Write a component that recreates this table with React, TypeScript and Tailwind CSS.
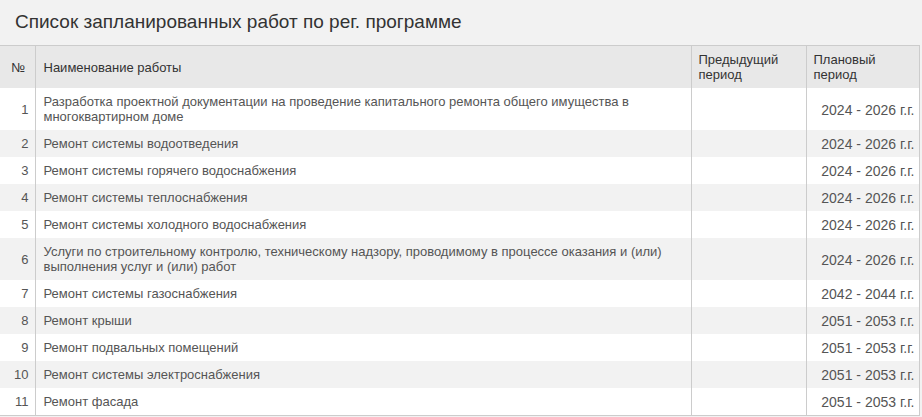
import React from 'react';

interface Work {
    num: number;
    name: string;
    prev: string;
    plan: string;
}

const works: Work[] = [
    { num: 1, name: 'Разработка проектной документации на проведение капитального ремонта общего имущества в многоквартирном доме', prev: '', plan: '2024 - 2026 г.г.' },
    { num: 2, name: 'Ремонт системы водоотведения', prev: '', plan: '2024 - 2026 г.г.' },
    { num: 3, name: 'Ремонт системы горячего водоснабжения', prev: '', plan: '2024 - 2026 г.г.' },
    { num: 4, name: 'Ремонт системы теплоснабжения', prev: '', plan: '2024 - 2026 г.г.' },
    { num: 5, name: 'Ремонт системы холодного водоснабжения', prev: '', plan: '2024 - 2026 г.г.' },
    { num: 6, name: 'Услуги по строительному контролю, техническому надзору, проводимому в процессе оказания и (или) выполнения услуг и (или) работ', prev: '', plan: '2024 - 2026 г.г.' },
    { num: 7, name: 'Ремонт системы газоснабжения', prev: '', plan: '2042 - 2044 г.г.' },
    { num: 8, name: 'Ремонт крыши', prev: '', plan: '2051 - 2053 г.г.' },
    { num: 9, name: 'Ремонт подвальных помещений', prev: '', plan: '2051 - 2053 г.г.' },
    { num: 10, name: 'Ремонт системы электроснабжения', prev: '', plan: '2051 - 2053 г.г.' },
    { num: 11, name: 'Ремонт фасада', prev: '', plan: '2051 - 2053 г.г.' },
];

const App: React.FC = () => {
    return (
        <div className="w-[922px] h-[417px] bg-[#f2f2f2] overflow-hidden font-['Liberation_Sans',Arial,sans-serif]">
            <h1 className="h-[45px] pl-[15px] pt-[10px] text-[19px] leading-[24px] text-[#333]">
                Список запланированных работ по рег. программе
            </h1>
            <table className="w-[919px] table-fixed border-collapse border-t border-r border-b border-[#cccccc] text-[13px] leading-[15px] text-[#555]">
                <colgroup>
                    <col className="w-[35px]" />
                    <col className="w-[656px]" />
                    <col className="w-[115px]" />
                    <col className="w-[113px]" />
                </colgroup>
                <thead>
                    <tr className="bg-[#e8e8e8] text-[#333]">
                        <th className="py-[6px] pl-[2px] text-center font-normal">№</th>
                        <th className="border-l border-[#cccccc] py-[6px] px-[8px] text-left font-normal">Наименование работы</th>
                        <th className="border-l border-[#cccccc] py-[6px] px-[7px] text-left font-normal">Предыдущий период</th>
                        <th className="border-l border-[#cccccc] py-[6px] px-[7px] text-left font-normal">Плановый период</th>
                    </tr>
                </thead>
                <tbody>
                    {works.map((w, i) => (
                        <tr key={w.num} className={i % 2 === 0 ? 'bg-white' : 'bg-[#f2f2f2]'}>
                            <td className="py-[6px] pr-[6px] text-right align-middle">{w.num}</td>
                            <td className="border-l border-[#cccccc] py-[6px] px-[8px] align-middle">{w.name}</td>
                            <td className="border-l border-[#cccccc] py-[6px] px-[7px] align-middle">{w.prev}</td>
                            <td className="border-l border-[#cccccc] pt-[7px] pb-[5px] pr-[4px] text-right align-middle text-[14px]">{w.plan}</td>
                        </tr>
                    ))}
                </tbody>
            </table>
        </div>
    );
};

export default App;
